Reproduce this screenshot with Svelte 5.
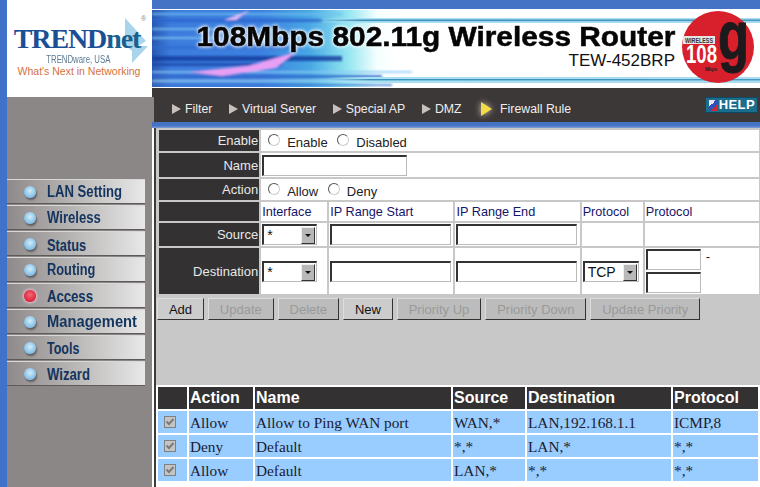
<script>
  // sx squeezes the label to the narrow face of the reference, dy is its vertical nudge
  const menu = [
    { label: "LAN Setting", sx: 0.82, dy: 0 },
    { label: "Wireless", sx: 0.82, dy: 0 },
    { label: "Status", sx: 0.8, dy: 2 },
    { label: "Routing", sx: 0.8, dy: 0 },
    { label: "Access", sx: 0.82, dy: 1, active: true },
    { label: "Management", sx: 0.92, dy: 0 },
    { label: "Tools", sx: 0.78, dy: 1 },
    { label: "Wizard", sx: 0.82, dy: 1 },
  ];
  const tabs = ["Filter", "Virtual Server", "Special AP", "DMZ"];
  const buttons = [
    { label: "Add", on: true },
    { label: "Update" },
    { label: "Delete" },
    { label: "New", on: true },
    { label: "Priority Up" },
    { label: "Priority Down" },
    { label: "Update Priority" },
  ];
  const rules = [
    ["Allow", "Allow to Ping WAN port", "WAN,*", "LAN,192.168.1.1", "ICMP,8"],
    ["Deny", "Default", "*,*", "LAN,*", "*,*"],
    ["Allow", "Default", "LAN,*", "*,*", "*,*"],
  ];
  // streaks across the left part of the banner: y, height, colour, length
  const streaks = [
    [3, 2, "#6fc0ee", 190], [9, 3, "#2a62cc", 170], [18, 2, "#7cc4f0", 120],
    [27, 2, "#86c8f2", 70], [36, 3, "#2f6ad0", 150], [46, 5, "#143c9c", 190],
    [53, 3, "#1a44a8", 130], [61, 2, "#8cc8f4", 260], [65, 3, "#2f68cc", 230],
    [70, 2, "#a8dcf6", 290], [74, 2, "#3c78d4", 240],
  ];
</script>

<div class="page">
  <div class="strip"></div>

  <div class="left">
    <div class="logo">
      <svg class="logo-arrow" viewBox="0 0 26 46" width="26" height="46">
        <path d="M2 0 L23 23 L15 28 L25 28 L9 45 L9 33 L2 27 Z" fill="#a8d4ec" />
      </svg>
      <span class="logo-reg">®</span>
      <div class="logo-name">TREND<span>net</span></div>
      <div class="logo-sub">TRENDware, USA</div>
      <div class="logo-tag">What's Next in Networking</div>
    </div>
    <nav class="side">
      {#each menu as item}
        <div class="side-item">
          <span class="bullet" class:red={item.active}></span>
          <span class="side-label" style="transform: translateY({item.dy}px) scaleX({item.sx})">{item.label}</span>
        </div>
      {/each}
    </nav>
  </div>

  <div class="right">
    <div class="topbar"></div>
    <header class="banner">
      <svg class="banner-art" viewBox="0 0 608 77" preserveAspectRatio="none">
        <defs>
          <linearGradient id="sky" x1="0" x2="1" y1="0" y2="0">
            <stop offset="0" stop-color="#2a58b0" />
            <stop offset="0.03" stop-color="#3c7cdc" />
            <stop offset="0.18" stop-color="#3c80e0" />
            <stop offset="0.26" stop-color="#48a8e4" />
            <stop offset="0.32" stop-color="#90e4f0" />
            <stop offset="0.37" stop-color="#f4ffff" />
            <stop offset="0.4" stop-color="#ffffff" />
          </linearGradient>
          <linearGradient id="line" x1="0" x2="1" y1="0" y2="0">
            <stop offset="0" stop-color="#3a90b8" stop-opacity="0" />
            <stop offset="0.1" stop-color="#3a90b8" />
            <stop offset="1" stop-color="#4a98c0" />
          </linearGradient>
          <linearGradient id="pale" x1="0" x2="1" y1="0" y2="0">
            <stop offset="0" stop-color="#a8e0f4" stop-opacity="0" />
            <stop offset="0.1" stop-color="#a8e0f4" />
            <stop offset="1" stop-color="#a8dcf0" />
          </linearGradient>
          <filter id="soft"><feGaussianBlur stdDeviation="0.9" /></filter>
        </defs>
        <rect width="608" height="77" fill="url(#sky)" />
        <g filter="url(#soft)">
          {#each streaks as [y, h, colour, len]}
            <rect x="0" {y} width={len} height={h} fill={colour} opacity="0.8" />
          {/each}
          <path d="M72 10 L98 0 L84 10 Z" fill="#e0b8f4" />
          <path d="M36 62 L96 56 L144 42 L124 58 L70 66 Z" fill="#e8a0f4" />
        </g>
        <rect x="165" y="8" width="443" height="5" fill="url(#pale)" />
        <rect x="165" y="9.5" width="443" height="1.6" fill="url(#line)" />
        <rect x="175" y="67" width="433" height="6" fill="url(#pale)" />
        <rect x="175" y="69" width="433" height="1.4" fill="url(#line)" />
      </svg>
      <div class="banner-text">
        <h1>108Mbps 802.11g Wireless Router</h1>
        <div class="model">TEW-452BRP</div>
      </div>
      <svg class="badge" viewBox="0 0 74 74" width="74" height="74">
        <circle cx="37" cy="36" r="36" fill="#d8202c" />
        <text x="37" y="48" textLength="31" lengthAdjust="spacingAndGlyphs" class="badge-g">g</text>
        <rect x="2" y="25" width="32" height="8" fill="#e4e4e4" />
        <text x="4" y="31.5" textLength="28" lengthAdjust="spacingAndGlyphs" class="badge-w">WIRELESS</text>
        <text x="5" y="52" textLength="31" lengthAdjust="spacingAndGlyphs" class="badge-108">108</text>
        <text x="24" y="60" textLength="12" lengthAdjust="spacingAndGlyphs" class="badge-m">Mbps</text>
      </svg>
    </header>

    <div class="tabs">
      {#each tabs as tab}
        <span class="tab"><i class="tri"></i>{tab}</span>
      {/each}
      <span class="tab current"><i class="tri lit"></i>Firewall Rule</span>
      <span class="help"><i></i>HELP</span>
    </div>
    <div class="rule"></div>

    <main class="main">
      <div class="form-area">
        <table class="form">
          <colgroup>
            <col style="width:100px" /><col style="width:66px" /><col style="width:124px" />
            <col style="width:124px" /><col style="width:61px" /><col style="width:114px" />
          </colgroup>
          <tbody>
            <tr class="r1">
              <th>Enable</th>
              <td colspan="5" class="opts">
                <label><input type="radio" name="en" />Enable</label>
                <label><input type="radio" name="en" />Disabled</label>
              </td>
            </tr>
            <tr class="r2">
              <th>Name</th>
              <td colspan="5"><input class="text name" type="text" /></td>
            </tr>
            <tr class="r3">
              <th>Action</th>
              <td colspan="5" class="opts">
                <label><input type="radio" name="ac" />Allow</label>
                <label><input type="radio" name="ac" />Deny</label>
              </td>
            </tr>
            <tr class="r4 heads">
              <th></th>
              <td>Interface</td>
              <td>IP Range Start</td>
              <td>IP Range End</td>
              <td>Protocol</td>
              <td>Protocol</td>
            </tr>
            <tr class="r5">
              <th>Source</th>
              <td><div class="select"><span>*</span><i></i></div></td>
              <td><input class="text ip" type="text" /></td>
              <td><input class="text ip" type="text" /></td>
              <td></td>
              <td></td>
            </tr>
            <tr class="r6">
              <th>Destination</th>
              <td><div class="select"><span>*</span><i></i></div></td>
              <td><input class="text ip" type="text" /></td>
              <td><input class="text ip" type="text" /></td>
              <td><div class="select tcp"><span>TCP</span><i></i></div></td>
              <td>
                <div class="ports">
                  <div class="port-row"><input class="text port" type="text" /><span>-</span></div>
                  <input class="text port" type="text" />
                </div>
              </td>
            </tr>
          </tbody>
        </table>

        <div class="actions">
          {#each buttons as b}
            <button class:on={b.on} disabled={!b.on}>{b.label}</button>
          {/each}
        </div>
      </div>

      <table class="list">
        <colgroup>
          <col style="width:29px" /><col style="width:64px" /><col style="width:196px" />
          <col style="width:72px" /><col style="width:144px" /><col style="width:85px" />
        </colgroup>
        <thead>
          <tr>
            <th></th><th>Action</th><th>Name</th><th>Source</th><th>Destination</th><th>Protocol</th>
          </tr>
        </thead>
        <tbody>
          {#each rules as row}
            <tr>
              <td class="check">
                <svg viewBox="0 0 12 12" width="12" height="12">
                  <rect x="0.5" y="0.5" width="11" height="11" fill="#c4c4c4" stroke="#808080" />
                  <path d="M2.5 5.5 L5 8 L9.5 3" fill="none" stroke="#7a7a7a" stroke-width="2" />
                </svg>
              </td>
              {#each row as cell}
                <td>{cell}</td>
              {/each}
            </tr>
          {/each}
        </tbody>
      </table>
    </main>
  </div>
</div>

<style>
  :global(body) {
    margin: 0;
    background: #fff;
    overflow: hidden;
  }

  .page {
    display: flex;
    width: 760px;
    height: 487px;
    overflow: hidden;
    font-family: "Liberation Sans", Arial, sans-serif;
  }

  .strip {
    width: 7px;
    background: #3f72c8;
  }

  .left {
    width: 145px;
    display: flex;
    flex-direction: column;
    background: #8b8786;
  }

  .logo {
    position: relative;
    height: 97px;
    background: #fff;
    text-align: center;
    box-sizing: border-box;
    padding-top: 24px;
  }

  .logo-arrow {
    position: absolute;
    left: 116px;
    top: 18px;
  }

  .logo-reg {
    position: absolute;
    left: 134px;
    top: 15px;
    font-size: 7px;
    color: #888;
  }

  .logo-name {
    position: relative;
    font: bold 28px/30px "Liberation Serif", serif;
    color: #1a4f96;
    letter-spacing: -1.1px;
    padding-right: 5px;
    white-space: nowrap;
  }

  .logo-name span {
    color: #17608f;
  }

  .logo-sub {
    font-size: 10px;
    line-height: 11px;
    color: #5a7a94;
    padding-right: 3px;
    transform: scaleX(0.78);
    white-space: nowrap;
  }

  .logo-tag {
    font-size: 10.5px;
    line-height: 13px;
    color: #d8703c;
    white-space: nowrap;
    padding-left: 2px;
    padding-right: 3px;
  }

  .side {
    padding-top: 82px;
    display: flex;
    flex-direction: column;
  }

  .side-item {
    height: 23px;
    width: 138px;
    margin-bottom: 1px;
    display: flex;
    align-items: center;
    position: relative;
    background: linear-gradient(90deg, #8e8a89 0%, #b5b3b2 45%, #e8e8e8 100%);
    border-top: 1px solid #d8d8d8;
    border-bottom: 1px solid #5e5a5a;
  }

  .bullet {
    position: absolute;
    left: 17px;
    width: 12px;
    height: 12px;
    border-radius: 50%;
    background: radial-gradient(circle at 50% 40%, #d2ecfa 0%, #8cc4e8 60%, #6ea6d2 100%);
    box-shadow: 1px 2px 2px rgba(50, 50, 60, 0.6);
  }

  .bullet.red {
    background: radial-gradient(circle at 50% 40%, #f06a78 0%, #e0203a 70%, #c0102a 100%);
    box-shadow: 0 0 3px 1px #f0c0d0;
  }

  .side-label {
    position: absolute;
    left: 40px;
    font-size: 16px;
    font-weight: bold;
    color: #13345e;
    white-space: nowrap;
    transform-origin: left center;
  }

  .right {
    flex: 1;
    display: flex;
    flex-direction: column;
    min-width: 0;
  }

  .topbar {
    height: 9px;
    background: #4472c4;
    border-bottom: 1px solid #fff;
  }

  .banner {
    position: relative;
    height: 77px;
    display: flex;
    justify-content: flex-end;
    align-items: flex-start;
    border-bottom: 1px solid #fff;
  }

  .banner-art {
    position: absolute;
    inset: 0;
    width: 100%;
    height: 100%;
  }

  .banner-text {
    position: relative;
    text-align: right;
    margin-top: 12px;
    margin-right: 6px;
  }

  h1 {
    margin: 0;
    font-size: 27px;
    line-height: 30px;
    font-weight: bold;
    color: #050505;
    white-space: nowrap;
    -webkit-text-stroke: 0.5px #050505;
    text-shadow: 0 0 4px #fff, 0 0 4px #fff, 0 0 2px #fff;
    transform: scaleX(1.105);
    transform-origin: right center;
  }

  .model {
    font-size: 17px;
    line-height: 17px;
    color: #111;
  }

  .badge {
    position: relative;
    margin-top: 1px;
    margin-right: 5px;
  }

  .badge-g {
    font: bold 68px "Liberation Sans", sans-serif;
    fill: #1c1a1c;
    stroke: #1c1a1c;
    stroke-width: 1;
  }

  .badge-w {
    font: bold 7px "Liberation Sans", sans-serif;
    fill: #333;
  }

  .badge-108 {
    font: bold 25px "Liberation Sans", sans-serif;
    fill: #fff;
  }

  .badge-m {
    font: bold 6px "Liberation Sans", sans-serif;
    fill: #222;
  }

  .tabs {
    position: relative;
    height: 34px;
    background: #3d3838;
    display: flex;
    align-items: center;
    padding: 8px 0 0 20px;
    box-sizing: border-box;
    color: #eee;
    font-size: 12.3px;
  }

  .tabs::before {
    content: "";
    position: absolute;
    left: 0;
    top: 9px;
    bottom: 0;
    width: 2px;
    background: #8b8786;
  }

  .tab {
    display: inline-flex;
    align-items: center;
    margin-right: 16.6px;
    white-space: nowrap;
  }

  .tri {
    width: 0;
    height: 0;
    margin-right: 4px;
    border-style: solid;
    border-width: 5px 0 5px 9px;
    border-color: transparent transparent transparent #c8c0bc;
  }

  .tri.lit {
    border-width: 7px 0 7px 11px;
    border-left-color: #f4dc48;
    filter: drop-shadow(0 0 3px #d8ceb0);
    margin-right: 8px;
  }

  .current {
    margin-left: 3px;
  }

  .help {
    position: absolute;
    left: 553px;
    top: 9px;
    width: 53px;
    height: 16px;
    box-sizing: border-box;
    background: #1c6c8c;
    border: 1px solid #0e4a66;
    color: #fff;
    font: bold 13px/14px "Liberation Sans", sans-serif;
    letter-spacing: 0.4px;
    display: flex;
    align-items: center;
    justify-content: flex-end;
    padding-right: 2px;
  }

  .help i {
    width: 9px;
    height: 11px;
    margin-right: 1px;
    background: linear-gradient(135deg, #e8e8f0 35%, #3050c0 35%, #3050c0 65%, #d02830 65%);
  }

  .rule {
    height: 6px;
    background: linear-gradient(180deg, #4472c4 60%, #80a0d8 100%);
  }

  .main {
    flex: 1;
    margin-left: 2px;
    border-left: 2px solid #3d3a3a;
    background: #fff;
    display: flex;
    flex-direction: column;
    min-height: 0;
  }

  .form-area {
    background: #c8c8c8;
    height: 257px;
    flex: none;
  }

  table {
    border-collapse: separate;
    border-spacing: 2px;
    table-layout: fixed;
  }

  .form {
    width: 604px;
    font-size: 13px;
    margin-left: 1px;
  }

  .form th {
    background: #333131;
    color: #e8e8e8;
    font-weight: normal;
    text-align: right;
    padding: 0 1px 0 0;
  }

  .form td {
    background: #fff;
    padding: 0 0 0 1px;
    color: #222;
  }

  .r1 { height: 21px; }
  .r2 { height: 24px; }
  .r3 { height: 21px; }
  .r4 { height: 19px; }
  .r5 { height: 23px; }
  .r6 { height: 46px; }

  .form .heads td {
    color: #14146a;
    white-space: nowrap;
    font-size: 12.7px;
  }

  .opts label {
    display: inline-flex;
    align-items: center;
    margin-right: 0;
    padding-top: 3px;
  }

  .opts input {
    appearance: none;
    width: 12px;
    height: 12px;
    margin: 0 7px 5px 6px;
    border-radius: 50%;
    background: #fff;
    border: 1px solid;
    border-color: #555 #ccc #ccc #555;
    box-sizing: border-box;
  }

  .text {
    box-sizing: border-box;
    display: block;
    height: 21px;
    padding: 0;
    background: #fff;
    border: 1px solid;
    border-color: #333 #bbb #bbb #333;
    border-top-width: 2px;
    border-left-width: 2px;
    outline: none;
  }

  .name { width: 145px; }
  .ip { width: 121px; }
  .port { width: 55px; }

  .select {
    position: relative;
    box-sizing: border-box;
    width: 55px;
    height: 21px;
    border: 1px solid;
    border-color: #333 #bbb #bbb #333;
    border-top-width: 2px;
    border-left-width: 2px;
    display: flex;
    align-items: center;
    padding-left: 3px;
    font-size: 14px;
    color: #111;
  }

  .select.tcp {
    width: 56px;
  }

  .select i {
    position: absolute;
    right: 1px;
    top: 1px;
    width: 12px;
    height: 15px;
    background: #b8b8b8;
    border: 1px solid;
    border-color: #eee #333 #333 #eee;
  }

  .select i::after {
    content: "";
    position: absolute;
    left: 3px;
    top: 6px;
    border-style: solid;
    border-width: 3px 3px 0;
    border-color: #111 transparent transparent;
  }

  .ports {
    display: flex;
    flex-direction: column;
    gap: 2px;
  }

  .port-row {
    display: flex;
    gap: 5px;
  }

  .actions {
    display: flex;
    gap: 4px;
    padding: 2px 0 0 1px;
  }

  button {
    height: 22px;
    padding: 0 10.9px;
    font: 13px "Liberation Sans", sans-serif;
    background: #bcbcbc;
    border: 1px solid;
    border-color: #ddd #333 #333 #ddd;
    color: #9a9a9a;
    white-space: nowrap;
  }

  button.on {
    background: #cccccc;
    color: #111;
  }

  .list {
    width: 604px;
    flex: none;
  }

  .list th {
    height: 22px;
    padding: 0 0 0 1px;
    background: #333131;
    color: #fff;
    font-size: 16px;
    text-align: left;
  }

  .list td {
    height: 22px;
    padding: 1px 0 0 1px;
    box-sizing: border-box;
    background: #99ccff;
    color: #1c1c30;
    font: 15.3px "Liberation Serif", serif;
    white-space: nowrap;
  }

  .list td.check {
    padding: 0 0 0 6px;
  }

  .check svg {
    display: block;
  }
</style>
